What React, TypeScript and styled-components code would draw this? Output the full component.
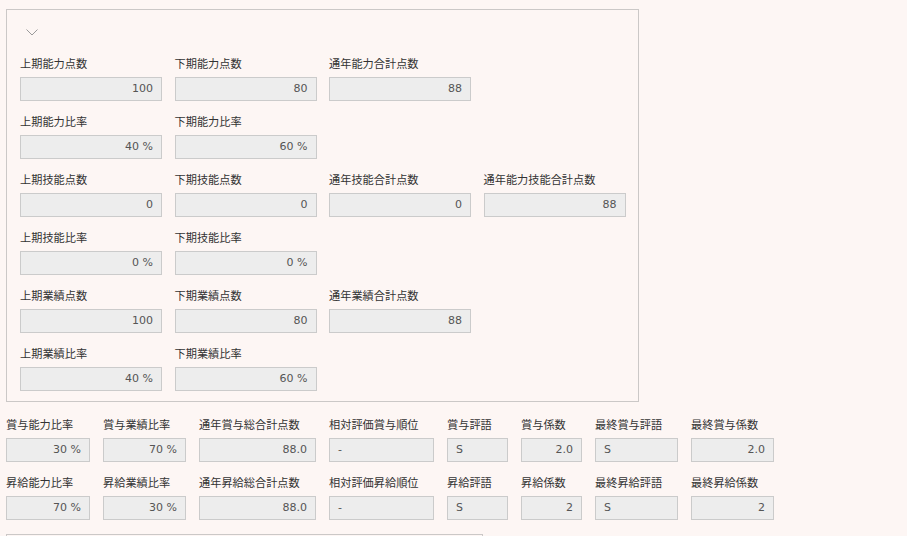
import React from 'react';
import styled, { createGlobalStyle } from 'styled-components';

const GlobalStyle = createGlobalStyle`
  html, body {
    margin: 0;
    padding: 0;
    overflow: hidden;
    background: #fdf6f4;
  }
  body {
    font-family: "Noto Sans CJK JP", "Noto Sans", sans-serif;
    font-size: 11.2px;
    color: #333;
  }
`;

const Page = styled.div`
  display: flex;
  flex-direction: column;
  padding: 9px 0 0 6px;
`;

const Panel = styled.section`
  box-sizing: border-box;
  width: 633px;
  border: 1px solid #cbc8c7;
  padding: 0 0 10px 13px;
  display: flex;
  flex-direction: column;
`;

const Toggle = styled.div`
  height: 44px;
  display: flex;
  align-items: center;
  padding-left: 6px;
`;

const Rows = styled.div`
  display: flex;
  flex-direction: column;
  row-gap: 11px;
`;

type RowProps = { gap: number };

const Row = styled.div<RowProps>`
  display: flex;
  flex-direction: row;
  column-gap: ${({ gap }) => gap}px;
`;

type FieldProps = { width: number };

const Field = styled.div<FieldProps>`
  display: flex;
  flex-direction: column;
  width: ${({ width }) => width}px;
`;

const Label = styled.div`
  height: 18px;
  line-height: 18px;
  margin-bottom: 5px;
  white-space: nowrap;
  color: #333;
`;

type ValueProps = { align: 'left' | 'right' };

const Value = styled.div<ValueProps>`
  box-sizing: border-box;
  height: 24px;
  line-height: 22px;
  border: 1px solid #cbcbcb;
  background: #ededed;
  color: #555;
  padding: 0 8px;
  font-family: "DejaVu Sans", "Noto Sans CJK JP", sans-serif;
  font-size: 11px;
  text-align: ${({ align }) => align};
`;

const Summary = styled.div`
  display: flex;
  flex-direction: column;
  row-gap: 11px;
  margin-top: 13px;
`;

const NextBox = styled.div`
  margin-top: 14px;
  width: 475px;
  height: 30px;
  border: 1px solid #cbc8c7;
`;

type Item = { label: string; value: string };

const panelRows: Item[][] = [
  [
    { label: '上期能力点数', value: '100' },
    { label: '下期能力点数', value: '80' },
    { label: '通年能力合計点数', value: '88' },
  ],
  [
    { label: '上期能力比率', value: '40 %' },
    { label: '下期能力比率', value: '60 %' },
  ],
  [
    { label: '上期技能点数', value: '0' },
    { label: '下期技能点数', value: '0' },
    { label: '通年技能合計点数', value: '0' },
    { label: '通年能力技能合計点数', value: '88' },
  ],
  [
    { label: '上期技能比率', value: '0 %' },
    { label: '下期技能比率', value: '0 %' },
  ],
  [
    { label: '上期業績点数', value: '100' },
    { label: '下期業績点数', value: '80' },
    { label: '通年業績合計点数', value: '88' },
  ],
  [
    { label: '上期業績比率', value: '40 %' },
    { label: '下期業績比率', value: '60 %' },
  ],
];

type SummaryItem = Item & { width: number; align: 'left' | 'right' };

const summaryRows: SummaryItem[][] = [
  [
    { label: '賞与能力比率', value: '30 %', width: 84, align: 'right' },
    { label: '賞与業績比率', value: '70 %', width: 83, align: 'right' },
    { label: '通年賞与総合計点数', value: '88.0', width: 117, align: 'right' },
    { label: '相対評価賞与順位', value: '-', width: 105, align: 'left' },
    { label: '賞与評語', value: 'S', width: 61, align: 'left' },
    { label: '賞与係数', value: '2.0', width: 61, align: 'right' },
    { label: '最終賞与評語', value: 'S', width: 83, align: 'left' },
    { label: '最終賞与係数', value: '2.0', width: 83, align: 'right' },
  ],
  [
    { label: '昇給能力比率', value: '70 %', width: 84, align: 'right' },
    { label: '昇給業績比率', value: '30 %', width: 83, align: 'right' },
    { label: '通年昇給総合計点数', value: '88.0', width: 117, align: 'right' },
    { label: '相対評価昇給順位', value: '-', width: 105, align: 'left' },
    { label: '昇給評語', value: 'S', width: 61, align: 'left' },
    { label: '昇給係数', value: '2', width: 61, align: 'right' },
    { label: '最終昇給評語', value: 'S', width: 83, align: 'left' },
    { label: '最終昇給係数', value: '2', width: 83, align: 'right' },
  ],
];

const Chevron = () => (
  <svg width="12" height="7" viewBox="0 0 12 7" fill="none">
    <path d="M0.5 0.5 L6 6 L11.5 0.5" stroke="#9a9a9a" strokeWidth="1" />
  </svg>
);

const App: React.FC = () => (
  <>
    <GlobalStyle />
    <Page>
      <Panel>
        <Toggle>
          <Chevron />
        </Toggle>
        <Rows>
          {panelRows.map((row, r) => (
            <Row key={`panel-row-${r}`} gap={12.5}>
              {row.map((item) => (
                <Field key={item.label} width={142}>
                  <Label>{item.label}</Label>
                  <Value align="right">{item.value}</Value>
                </Field>
              ))}
            </Row>
          ))}
        </Rows>
      </Panel>
      <Summary>
        {summaryRows.map((row, r) => (
          <Row key={`summary-row-${r}`} gap={13}>
            {row.map((item) => (
              <Field key={item.label} width={item.width}>
                <Label>{item.label}</Label>
                <Value align={item.align}>{item.value}</Value>
              </Field>
            ))}
          </Row>
        ))}
      </Summary>
      <NextBox />
    </Page>
  </>
);

export default App;
